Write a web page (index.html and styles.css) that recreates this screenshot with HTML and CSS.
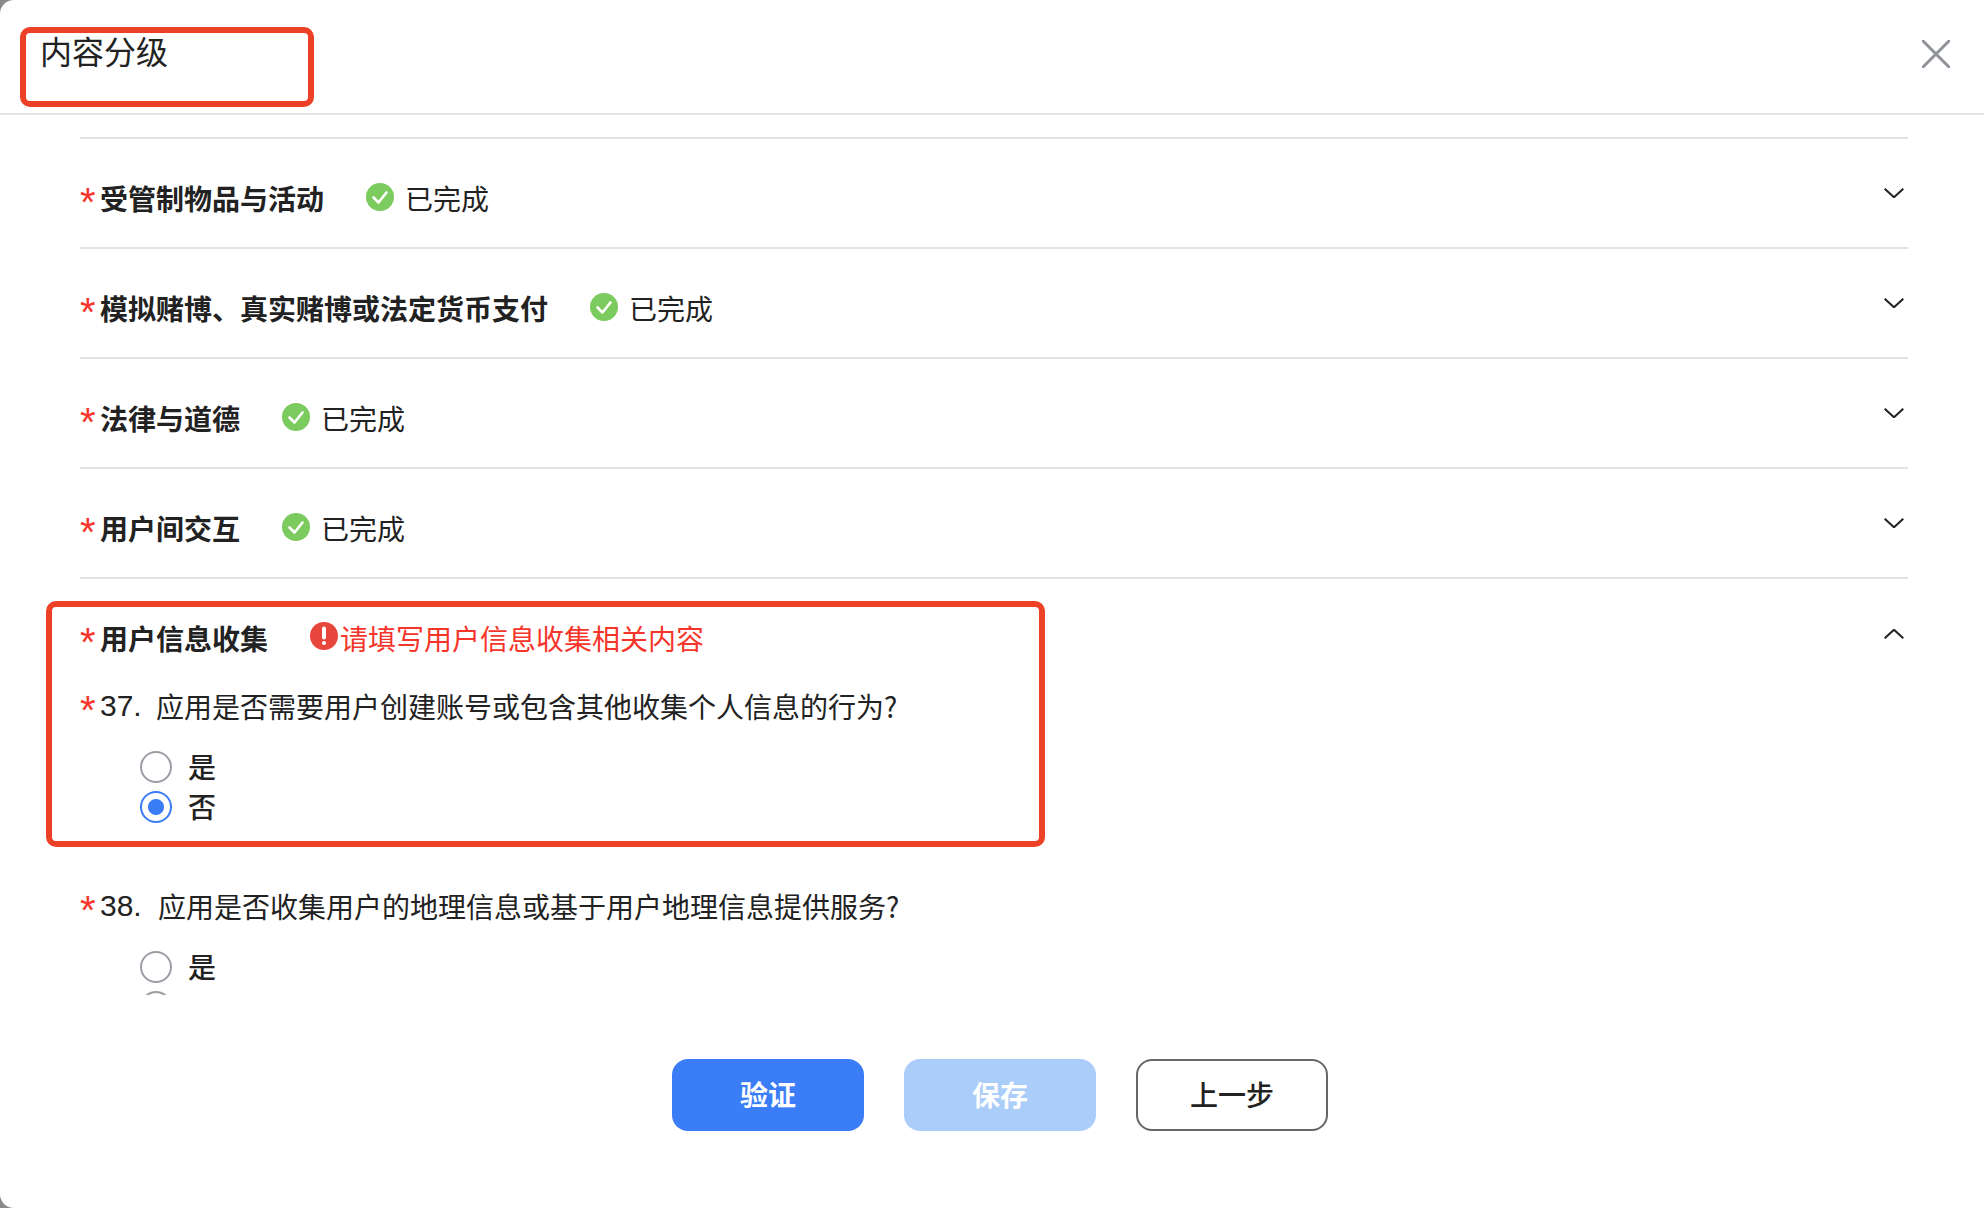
FILE: index.html
```html
<!DOCTYPE html>
<html lang="zh-CN">
<head>
<meta charset="utf-8">
<title>内容分级</title>
<link rel="stylesheet" href="styles.css">
</head>
<body>
<div class="dialog">
  <header class="head">
    <h1 class="title">内容分级</h1>
    <svg class="close" viewBox="0 0 28 28"><path d="M1 1 27 27M27 1 1 27"/></svg>
  </header>
  <main class="list">
    <section class="row">
      <div class="row-head"><span class="req">*</span><span class="name">受管制物品与活动</span>
        <svg class="ok" viewBox="0 0 28 28"><circle cx="14" cy="14" r="14"/><path d="M7.5 14.5 12.5 19.5 20.5 9.5"/></svg><span class="done">已完成</span>
        <svg class="chev" viewBox="0 0 20 10"><path d="M.7.7 10 9.3 19.3.7"/></svg></div>
    </section>
    <section class="row">
      <div class="row-head"><span class="req">*</span><span class="name">模拟赌博、真实赌博或法定货币支付</span>
        <svg class="ok" viewBox="0 0 28 28"><circle cx="14" cy="14" r="14"/><path d="M7.5 14.5 12.5 19.5 20.5 9.5"/></svg><span class="done">已完成</span>
        <svg class="chev" viewBox="0 0 20 10"><path d="M.7.7 10 9.3 19.3.7"/></svg></div>
    </section>
    <section class="row">
      <div class="row-head"><span class="req">*</span><span class="name">法律与道德</span>
        <svg class="ok" viewBox="0 0 28 28"><circle cx="14" cy="14" r="14"/><path d="M7.5 14.5 12.5 19.5 20.5 9.5"/></svg><span class="done">已完成</span>
        <svg class="chev" viewBox="0 0 20 10"><path d="M.7.7 10 9.3 19.3.7"/></svg></div>
    </section>
    <section class="row">
      <div class="row-head"><span class="req">*</span><span class="name">用户间交互</span>
        <svg class="ok" viewBox="0 0 28 28"><circle cx="14" cy="14" r="14"/><path d="M7.5 14.5 12.5 19.5 20.5 9.5"/></svg><span class="done">已完成</span>
        <svg class="chev" viewBox="0 0 20 10"><path d="M.7.7 10 9.3 19.3.7"/></svg></div>
    </section>
    <section class="row open">
      <div class="row-head"><span class="req">*</span><span class="name">用户信息收集</span>
        <svg class="err" viewBox="0 0 28 28"><circle cx="14" cy="14" r="14"/><path d="M14 6.5V15.5"/><circle class="dot" cx="14" cy="21" r="2"/></svg><span class="err-text">请填写用户信息收集相关内容</span>
        <svg class="chev up" viewBox="0 0 20 10"><path d="M.7 9.3 10 .7 19.3 9.3"/></svg></div>
      <div class="q"><span class="req">*</span><span class="num">37.</span><span>应用是否需要用户创建账号或包含其他收集个人信息的行为?</span></div>
      <div class="opts">
        <label class="opt"><span class="radio"></span>是</label>
        <label class="opt"><span class="radio on"></span>否</label>
      </div>
      <div class="q q-next"><span class="req">*</span><span class="num">38.</span><span>应用是否收集用户的地理信息或基于用户地理信息提供服务?</span></div>
      <div class="opts">
        <label class="opt"><span class="radio"></span>是</label>
        <label class="opt"><span class="radio"></span>否</label>
      </div>
    </section>
  </main>
  <footer class="foot">
    <button class="btn primary">验证</button>
    <button class="btn light">保存</button>
    <button class="btn ghost">上一步</button>
  </footer>
  <div class="mark mark-title"></div>
  <div class="mark mark-section"></div>
</div>
</body>
</html>
```
FILE: styles.css
```css
* { box-sizing: border-box; }
html, body { margin: 0; height: 100%; background: #8a8a8a; }
body { font-family: "Noto Sans CJK SC", "Liberation Sans", sans-serif; color: #1f1f1f; overflow: hidden; }
.dialog { position: relative; width: 1984px; height: 1208px; background: #fff; border-radius: 14px 0 0 14px; display: flex; flex-direction: column; overflow: hidden; }
.head { height: 115px; flex: none; border-bottom: 2px solid #e4e4e4; display: flex; justify-content: space-between; align-items: flex-start; padding: 40px 34px 0 40px; }
.title { margin: -2px 0 0; font-size: 32px; font-weight: 400; line-height: 24px; color: #222; }
.close { width: 28px; height: 28px; }
.close path { fill: none; stroke: #8f9298; stroke-width: 3; stroke-linecap: round; }
.list { height: 880px; flex: none; overflow: hidden; padding: 22px 76px 0 80px; }
.row { border-top: 2px solid #e2e2e2; height: 110px; }
.row.open { height: auto; }
.row-head { display: flex; align-items: center; height: 40px; margin-top: 39px; }
.req { width: 20px; height: 40px; flex: none; align-self: flex-start; padding-top: 4px; color: #f5352a; font-family: "Liberation Sans", sans-serif; font-size: 40px; line-height: 40px; }
.name { font-size: 28px; font-weight: 700; line-height: 40px; color: #222; }
.ok { width: 28px; height: 28px; margin-left: 42px; margin-top: -2px; flex: none; }
.ok circle { fill: #7bcb5e; }
.ok path { fill: none; stroke: #fff; stroke-width: 2.6; stroke-linecap: round; stroke-linejoin: round; }
.done { margin-left: 11px; font-size: 28px; line-height: 40px; color: #222; }
.chev { width: 20px; height: 10px; margin-left: auto; margin-right: 4px; margin-top: -10px; flex: none; }
.chev.up { margin-top: -9px; }
.chev path { fill: none; stroke: #222; stroke-width: 2; }
.err { width: 28px; height: 28px; margin-left: 42px; margin-top: -4px; flex: none; }
.err > circle { fill: #e8453c; }
.err path { stroke: #fff; stroke-width: 4; stroke-linecap: round; }
.err .dot { fill: #fff; }
.err-text { margin-left: 2px; font-size: 28px; line-height: 40px; color: #f5352a; }
.q { display: flex; margin-top: 28px; font-size: 28px; line-height: 40px; color: #222; }
.q-next { margin-top: 60px; }
.num { font-family: "Liberation Sans", sans-serif; font-size: 30px; width: 56px; flex: none; }
.q-next .num { width: 58px; }
.opts { margin-top: 20px; padding-left: 60px; display: flex; flex-direction: column; }
.opt { display: flex; align-items: center; height: 40px; font-size: 28px; font-weight: 500; color: #222; }
.radio { width: 32px; height: 32px; border: 2.5px solid #9a9da3; border-radius: 50%; margin-right: 16px; margin-top: 1px; flex: none; }
.radio.on { border-color: #3a7df7; background: radial-gradient(circle, #3a7df7 0 7.5px, #fff 8.5px); }
.foot { flex: 1; display: flex; justify-content: center; gap: 40px; padding: 64px 0 0 16px; align-items: flex-start; }
.btn { width: 192px; height: 72px; border-radius: 16px; border: 0; font-family: inherit; font-size: 28px; font-weight: 700; padding: 0 0 2px; }
.primary { background: #3a7df7; color: #fff; }
.light { background: #aacdfa; color: #fff; }
.ghost { background: #fff; border: 2px solid #666; color: #222; font-weight: 500; }
.mark { position: absolute; border: 6px solid #ec4126; border-radius: 10px; }
.mark-title { left: 20px; top: 27px; width: 294px; height: 80px; }
.mark-section { left: 46px; top: 601px; width: 999px; height: 246px; }
```
